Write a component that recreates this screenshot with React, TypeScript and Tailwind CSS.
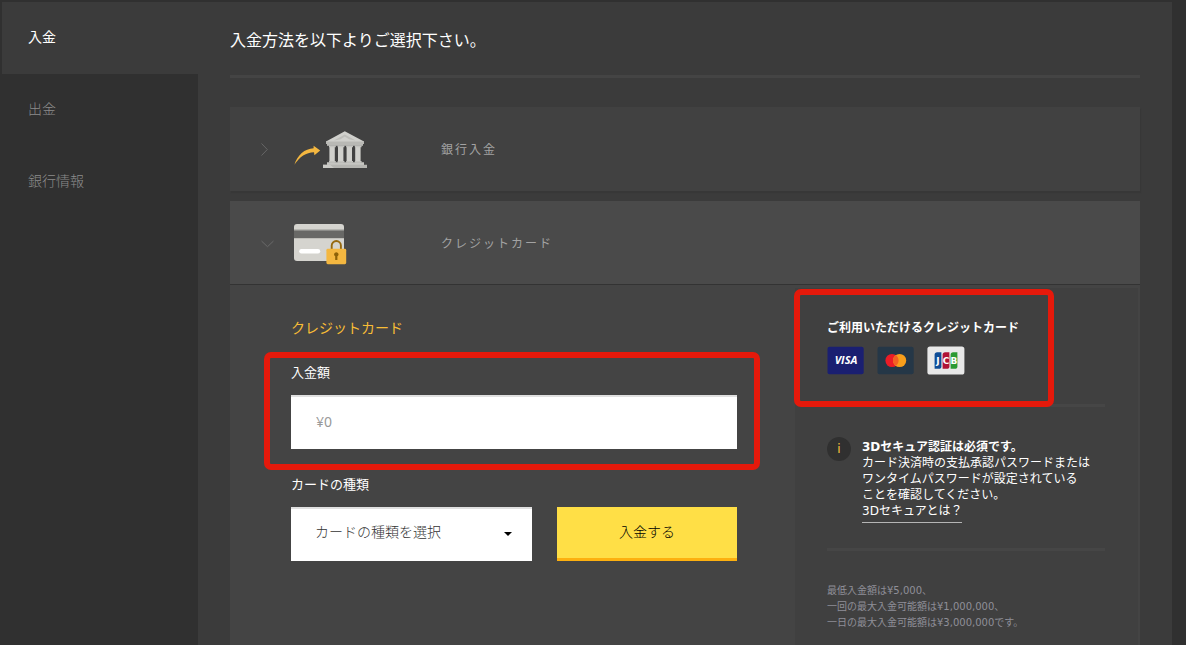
import type { ReactNode } from "react";

function ChevronRight() {
  return (
    <svg width="13" height="14" viewBox="0 0 13 14" fill="none" stroke="#666" strokeWidth="1" aria-hidden="true">
      <path d="M0.5 0.5 6.3 6.5 0.5 12.5" />
    </svg>
  );
}

function ChevronDown() {
  return (
    <svg width="13" height="14" viewBox="0 0 13 14" fill="none" stroke="#6a6a6a" strokeWidth="1" aria-hidden="true">
      <path d="M0.5 4 6.5 9.7 12.5 4" />
    </svg>
  );
}

function BankIcon() {
  return (
    <svg width="74" height="38" viewBox="0 0 74 38" aria-hidden="true">
      <path d="M0.4 33.8C3.4 24 10.6 17.6 19.6 17.2V14.8L26.2 19.4 20.4 24.2 20 21.2C12 21.6 5.6 25.6 0.4 33.8Z" fill="#f4b740" />
      <path d="M32 10.6 50.8 0.2 70 10.6V13H69V14.6H33V13H32Z" fill="#d0d0cc" />
      <path d="M32 10.6H70V13H69V14.6H33V13H32Z" fill="#b9b9b5" />
      <path d="M40 9.4 50.8 3.4 61.6 9.4 55 8.2 50.8 5.6 46.6 8.2Z" fill="#bdbdb9" />
      <path d="M35.4 15h5.4v16.4h-5.4zM44 15h5.4v16.4H44zM52.6 15H58v16.4h-5.4zM61.2 15h5.4v16.4h-5.4z" fill="#d0d0cc" />
      <path d="M35 14.6h6.8v1.6H35zM43.6 14.6h6.8v1.6h-6.8zM52.2 14.6H59v1.6h-6.8zM60.8 14.6h6.8v1.6h-6.8zM35 30h6.8v1.6H35zM43.6 30h6.8v1.6h-6.8zM52.2 30H59v1.6h-6.8zM60.8 30h6.8v1.6h-6.8z" fill="#c4c4c0" />
      <path d="M33 31.2H70V34H33z" fill="#c6c6c2" />
      <path d="M29 33.8H73V37H29z" fill="#b5b5b1" />
      <path d="M29 33.8H36L40 37H29z" fill="#cbcbc7" />
    </svg>
  );
}

function LockedCardIcon() {
  return (
    <svg width="53" height="41" viewBox="0 0 53 41" aria-hidden="true">
      <rect x="0" y="0" width="50" height="37" rx="3" fill="#d5d4cf" />
      <rect x="0" y="5.8" width="50" height="8.4" fill="#686866" />
      <rect x="0" y="5.8" width="50" height="1" fill="#969692" />
      <rect x="5.2" y="25" width="21" height="4.4" rx="2.2" fill="#fff" />
      <path d="M37.7 25V21.6a4.6 4.6 0 0 1 9.2 0V25" fill="none" stroke="#96690f" strokeWidth="1.9" />
      <rect x="32.4" y="24.8" width="19.8" height="15.4" rx="1.4" fill="#f4b740" />
      <path d="M42.3 28.2a2.2 2.2 0 0 1 1.1 4.1V36h-2.2v-3.7a2.2 2.2 0 0 1 1.1-4.1Z" fill="#8d6208" />
    </svg>
  );
}

function VisaBadge() {
  return (
    <svg width="37" height="29" viewBox="0 0 37 29" role="img" aria-label="VISA">
      <rect x="0.5" y="0.7" width="36.2" height="27.6" rx="2" fill="#1a1f71" />
      <text
        x="19"
        y="18"
        textAnchor="middle"
        className="fill-white font-['Open_Sans',sans-serif] text-[11px] font-bold italic"
      >
        VISA
      </text>
    </svg>
  );
}

function MastercardBadge() {
  return (
    <svg width="37" height="29" viewBox="0 0 37 29" role="img" aria-label="Mastercard">
      <rect x="0.5" y="0.7" width="36.2" height="27.6" rx="2" fill="#253747" />
      <circle cx="15" cy="14.5" r="6.6" fill="#eb1c26" />
      <circle cx="22.6" cy="14.5" r="6.6" fill="#f79e1b" />
      <path d="M18.8 9.1a6.6 6.6 0 0 1 0 10.8a6.6 6.6 0 0 1 0-10.8Z" fill="#f26122" />
    </svg>
  );
}

function JcbBadge() {
  return (
    <svg width="38" height="29" viewBox="0 0 38 29" role="img" aria-label="JCB">
      <rect x="0.4" y="0.4" width="37" height="28.2" rx="2.6" fill="#e8e8e8" />
      <path d="M10.2 6.2H14.4V20.2Q14.4 22.8 11.8 22.8H7.6V8.8Q7.6 6.2 10.2 6.2Z" fill="#0e4c96" />
      <path d="M18.2 6.2H22.4V20.2Q22.4 22.8 19.8 22.8H15.6V8.8Q15.6 6.2 18.2 6.2Z" fill="#b01236" />
      <path d="M26.2 6.2H30.4V20.2Q30.4 22.8 27.8 22.8H23.6V8.8Q23.6 6.2 26.2 6.2Z" fill="#2a9a32" />
      <g textAnchor="middle" className="fill-white font-['DejaVu_Sans',sans-serif] text-[9px] font-bold">
        <text x="11" y="17.6">J</text>
        <text x="19" y="17.6">C</text>
        <text x="27" y="17.6">B</text>
      </g>
    </svg>
  );
}

function MethodHeader({ open, icon, label }: { open: boolean; icon: ReactNode; label: string }) {
  return (
    <button
      type="button"
      aria-expanded={open}
      className={
        open
          ? "flex h-[84px] w-full items-center border-b border-[#333] bg-[#4a4a4a] px-[31px] pt-[3px] text-left"
          : "flex h-[84px] w-full items-center bg-[#414141] px-[31px] pt-[1px] text-left shadow-[1px_2px_1px_#373737]"
      }
    >
      <span className="w-[33px] shrink-0">{open ? <ChevronDown /> : <ChevronRight />}</span>
      <span className="w-[147px] shrink-0">{icon}</span>
      <span className="text-xs tracking-[2px] text-[#a3a3a3]">{label}</span>
    </button>
  );
}

function NavItem({ label, active = false }: { label: string; active?: boolean }) {
  return (
    <a
      href="#"
      aria-current={active ? "page" : undefined}
      className={
        active
          ? "flex h-[72px] items-center bg-[#3b3b3b] px-[26px] pb-[2px] text-sm text-white"
          : "flex h-[72px] items-center px-[26px] pb-[2px] text-sm font-light text-[#8c8c8c]"
      }
    >
      {label}
    </a>
  );
}

export default function App() {
  return (
    <div className="flex min-h-screen bg-[#303030] pt-[2px] pr-[14px] pl-[2px] font-['Noto_Sans','Noto_Sans_CJK_JP',sans-serif] text-white">
      <nav className="w-[196px] shrink-0">
        <NavItem label="入金" active />
        <NavItem label="出金" />
        <NavItem label="銀行情報" />
      </nav>

      <main className="flex flex-1 flex-col bg-[#3b3b3b] px-8 pt-[26px]">
        <h1 className="border-b-[3px] border-[#444] pb-[23px] text-base leading-6">入金方法を以下よりご選択下さい。</h1>

        <section className="mt-[29px]">
          <MethodHeader open={false} icon={<BankIcon />} label="銀行入金" />
        </section>

        <section className="mt-[10px] flex flex-1 flex-col">
          <MethodHeader open icon={<LockedCardIcon />} label="クレジットカード" />

          <div className="flex flex-1 bg-[#444]">
            <form className="flex-1 pt-[33px] pr-[58px] pl-[61px]">
              <h2 className="text-sm leading-5 text-[#f8bd36]">クレジットカード</h2>

              <div className="relative mt-6">
                <label htmlFor="amount" className="block text-[13px] leading-5">
                  入金額
                </label>
                <input
                  id="amount"
                  type="text"
                  placeholder="¥0"
                  className="mt-[13px] block h-[54px] w-full border-t-2 border-[#e0e0e0] bg-white px-[25px] pb-[3px] text-sm text-[#555] outline-none placeholder:text-[#999]"
                />
                <div className="pointer-events-none absolute -top-[10px] -right-[23px] -bottom-[21px] -left-[27px] rounded-[7px] border-[6px] border-[#e5190b]" />
              </div>

              <div className="mt-[25px]">
                <label htmlFor="card-type" className="block text-[13px] leading-5">
                  カードの種類
                </label>
                <div className="mt-[13px] flex gap-[25px]">
                  <div className="relative flex-1">
                    <select
                      id="card-type"
                      defaultValue=""
                      className="block h-[54px] w-full appearance-none border-t-2 border-[#e0e0e0] bg-white pr-10 pb-[6px] pl-6 text-sm font-light text-[#333] outline-none"
                    >
                      <option value="">カードの種類を選択</option>
                      <option value="visa">VISA</option>
                      <option value="mastercard">Mastercard</option>
                      <option value="jcb">JCB</option>
                    </select>
                    <svg
                      className="pointer-events-none absolute top-[25px] right-5"
                      width="8"
                      height="4"
                      viewBox="0 0 8 4"
                      aria-hidden="true"
                    >
                      <path d="M0 0H8L4 4Z" fill="#000" />
                    </svg>
                  </div>
                  <button
                    type="button"
                    className="h-[54px] w-[180px] border-b-[3px] border-[#fdb00f] bg-[#ffdf46] pb-[2px] text-sm font-light text-black"
                  >
                    入金する
                  </button>
                </div>
              </div>
            </form>

            <aside className="w-[345px] shrink-0 border-t-[3px] border-r-2 border-[#444] bg-[#404040] pr-[33px] pb-3 pl-8 font-['DejaVu_Sans','Noto_Sans_CJK_JP',sans-serif]">
              <div className="relative mt-8">
                <h3 className="text-xs leading-4 font-bold">ご利用いただけるクレジットカード</h3>
                <div className="mt-[10px] flex gap-[13px]">
                  <VisaBadge />
                  <MastercardBadge />
                  <JcbBadge />
                </div>
                <div className="pointer-events-none absolute -top-[31px] right-[51px] -bottom-[32px] -left-[33px] z-10 rounded-[7px] border-[6px] border-[#e5190b]" />
              </div>

              <div className="mt-[29px] flex gap-[11px] border-y-[3px] border-[#464646] pt-[30px] pb-[25px]">
                <span className="flex size-6 shrink-0 items-center justify-center rounded-full bg-[#303030] text-xs text-[#ffc83c]">
                  i
                </span>
                <div className="pt-[2px] text-xs leading-4 whitespace-nowrap">
                  <p className="font-bold">3Dセキュア認証は必須です。</p>
                  <p>
                    カード決済時の支払承認パスワードまたは
                    <br />
                    ワンタイムパスワードが設定されている
                    <br />
                    ことを確認してください。
                  </p>
                  <a href="#" className="inline-block border-b border-[#b5b5b5] pb-[3px]">
                    3Dセキュアとは？
                  </a>
                </div>
              </div>

              <p className="mt-8 text-[10px] leading-4 text-[#8f8f98]">
                最低入金額は¥5,000、
                <br />
                一回の最大入金可能額は¥1,000,000、
                <br />
                一日の最大入金可能額は¥3,000,000です。
              </p>
            </aside>
          </div>
        </section>
      </main>
    </div>
  );
}
